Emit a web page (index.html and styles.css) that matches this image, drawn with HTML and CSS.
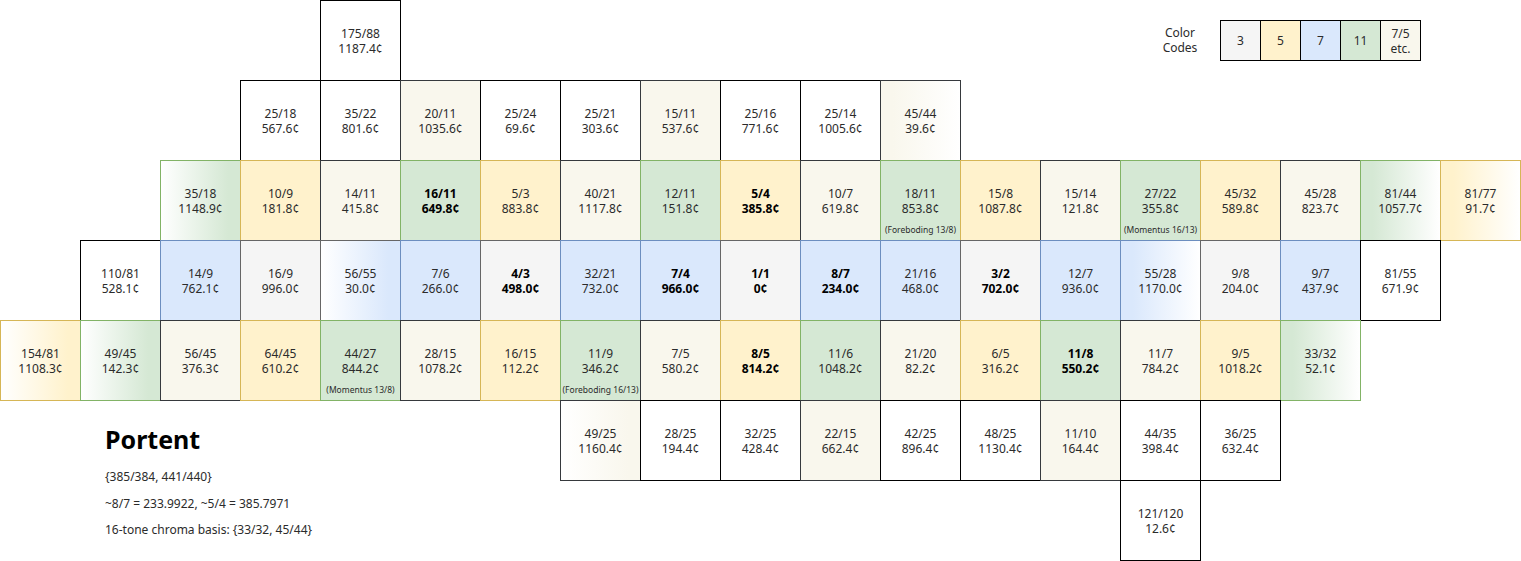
FILE: index.html
```html
<!DOCTYPE html>
<html lang="en">
<head>
<meta charset="utf-8">
<title>Portent</title>
<link rel="stylesheet" href="styles.css">
</head>
<body>
<div class="canvas">

  <div class="row r0">
    <div class="cell w"><div class="t">175/88<br>1187.4¢</div></div>
  </div>

  <div class="row r1">
    <div class="cell w"><div class="t">25/18<br>567.6¢</div></div>
    <div class="cell w"><div class="t">35/22<br>801.6¢</div></div>
    <div class="cell c"><div class="t">20/11<br>1035.6¢</div></div>
    <div class="cell w"><div class="t">25/24<br>69.6¢</div></div>
    <div class="cell w"><div class="t">25/21<br>303.6¢</div></div>
    <div class="cell c"><div class="t">15/11<br>537.6¢</div></div>
    <div class="cell w"><div class="t">25/16<br>771.6¢</div></div>
    <div class="cell w"><div class="t">25/14<br>1005.6¢</div></div>
    <div class="cell c-w"><div class="t">45/44<br>39.6¢</div></div>
  </div>

  <div class="row r2">
    <div class="cell w-g"><div class="t">35/18<br>1148.9¢</div></div>
    <div class="cell y"><div class="t">10/9<br>181.8¢</div></div>
    <div class="cell c"><div class="t">14/11<br>415.8¢</div></div>
    <div class="cell g"><div class="t b">16/11<br>649.8¢</div></div>
    <div class="cell y"><div class="t">5/3<br>883.8¢</div></div>
    <div class="cell c"><div class="t">40/21<br>1117.8¢</div></div>
    <div class="cell g"><div class="t">12/11<br>151.8¢</div></div>
    <div class="cell y"><div class="t b">5/4<br>385.8¢</div></div>
    <div class="cell c"><div class="t">10/7<br>619.8¢</div></div>
    <div class="cell g"><div class="t">18/11<br>853.8¢</div><div class="note">(Foreboding 13/8)</div></div>
    <div class="cell y"><div class="t">15/8<br>1087.8¢</div></div>
    <div class="cell c"><div class="t">15/14<br>121.8¢</div></div>
    <div class="cell g"><div class="t">27/22<br>355.8¢</div><div class="note">(Momentus 16/13)</div></div>
    <div class="cell y"><div class="t">45/32<br>589.8¢</div></div>
    <div class="cell c"><div class="t">45/28<br>823.7¢</div></div>
    <div class="cell g-w"><div class="t">81/44<br>1057.7¢</div></div>
    <div class="cell y-w"><div class="t">81/77<br>91.7¢</div></div>
  </div>

  <div class="row r3">
    <div class="cell w"><div class="t">110/81<br>528.1¢</div></div>
    <div class="cell bl"><div class="t">14/9<br>762.1¢</div></div>
    <div class="cell gr"><div class="t">16/9<br>996.0¢</div></div>
    <div class="cell w-bl"><div class="t">56/55<br>30.0¢</div></div>
    <div class="cell bl"><div class="t">7/6<br>266.0¢</div></div>
    <div class="cell gr"><div class="t b">4/3<br>498.0¢</div></div>
    <div class="cell bl"><div class="t">32/21<br>732.0¢</div></div>
    <div class="cell bl"><div class="t b">7/4<br>966.0¢</div></div>
    <div class="cell gr"><div class="t b">1/1<br>0¢</div></div>
    <div class="cell bl"><div class="t b">8/7<br>234.0¢</div></div>
    <div class="cell bl"><div class="t">21/16<br>468.0¢</div></div>
    <div class="cell gr"><div class="t b">3/2<br>702.0¢</div></div>
    <div class="cell bl"><div class="t">12/7<br>936.0¢</div></div>
    <div class="cell bl-w"><div class="t">55/28<br>1170.0¢</div></div>
    <div class="cell gr"><div class="t">9/8<br>204.0¢</div></div>
    <div class="cell bl"><div class="t">9/7<br>437.9¢</div></div>
    <div class="cell w"><div class="t">81/55<br>671.9¢</div></div>
  </div>

  <div class="row r4">
    <div class="cell w-y"><div class="t">154/81<br>1108.3¢</div></div>
    <div class="cell w-g"><div class="t">49/45<br>142.3¢</div></div>
    <div class="cell c"><div class="t">56/45<br>376.3¢</div></div>
    <div class="cell y"><div class="t">64/45<br>610.2¢</div></div>
    <div class="cell g"><div class="t">44/27<br>844.2¢</div><div class="note">(Momentus 13/8)</div></div>
    <div class="cell c"><div class="t">28/15<br>1078.2¢</div></div>
    <div class="cell y"><div class="t">16/15<br>112.2¢</div></div>
    <div class="cell g"><div class="t">11/9<br>346.2¢</div><div class="note">(Foreboding 16/13)</div></div>
    <div class="cell c"><div class="t">7/5<br>580.2¢</div></div>
    <div class="cell y"><div class="t b">8/5<br>814.2¢</div></div>
    <div class="cell g"><div class="t">11/6<br>1048.2¢</div></div>
    <div class="cell c"><div class="t">21/20<br>82.2¢</div></div>
    <div class="cell y"><div class="t">6/5<br>316.2¢</div></div>
    <div class="cell g"><div class="t b">11/8<br>550.2¢</div></div>
    <div class="cell c"><div class="t">11/7<br>784.2¢</div></div>
    <div class="cell y"><div class="t">9/5<br>1018.2¢</div></div>
    <div class="cell g-w"><div class="t">33/32<br>52.1¢</div></div>
  </div>

  <div class="row r5">
    <div class="cell w-c"><div class="t">49/25<br>1160.4¢</div></div>
    <div class="cell w"><div class="t">28/25<br>194.4¢</div></div>
    <div class="cell w"><div class="t">32/25<br>428.4¢</div></div>
    <div class="cell c"><div class="t">22/15<br>662.4¢</div></div>
    <div class="cell w"><div class="t">42/25<br>896.4¢</div></div>
    <div class="cell w"><div class="t">48/25<br>1130.4¢</div></div>
    <div class="cell c"><div class="t">11/10<br>164.4¢</div></div>
    <div class="cell w"><div class="t">44/35<br>398.4¢</div></div>
    <div class="cell w"><div class="t">36/25<br>632.4¢</div></div>
  </div>

  <div class="row r6">
    <div class="cell w"><div class="t">121/120<br>12.6¢</div></div>
  </div>

  <div class="legend">
    <div class="legend-label">Color<br>Codes</div>
    <div class="key gr">3</div>
    <div class="key y">5</div>
    <div class="key bl">7</div>
    <div class="key g">11</div>
    <div class="key c">7/5<br>etc.</div>
  </div>

  <div class="info">
    <h1 class="title">Portent</h1>
    <p class="line">{385/384, 441/440}</p>
    <p class="line">~8/7 = 233.9922, ~5/4 = 385.7971</p>
    <p class="line">16-tone chroma basis: {33/32, 45/44}</p>
  </div>

</div>
</body>
</html>
```

FILE: styles.css
```css
html, body {
  margin: 0;
  padding: 0;
  background: #ffffff;
}

body {
  font-family: "Noto Sans", "Open Sans", sans-serif;
  color: #2b2b2b;
  width: 1521px;
  height: 561px;
  overflow: hidden;
}

.canvas {
  display: grid;
  grid-template-columns: repeat(19, 80px);
  grid-template-rows: repeat(7, 80px);
  width: 1521px;
  height: 561px;
}

.row {
  grid-column: 1 / -1;
  display: flex;
  height: 80px;
}

.r0 { grid-row: 1; padding-left: 320px; }
.r1 { grid-row: 2; padding-left: 240px; }
.r2 { grid-row: 3; padding-left: 160px; }
.r3 { grid-row: 4; padding-left: 80px; }
.r4 { grid-row: 5; padding-left: 0; }
.r5 { grid-row: 6; padding-left: 560px; }
.r6 { grid-row: 7; padding-left: 1120px; }

.cell {
  flex: none;
  box-sizing: border-box;
  width: 81px;
  height: 81px;
  margin-right: -1px;
  border: 1px solid #000;
  display: grid;
  grid-template-rows: 1fr auto 1fr;
  text-align: center;
}

.t {
  grid-row: 2;
  font-size: 12px;
  line-height: 15px;
  color: #2b2b2b;
}

.t.b {
  font-weight: 700;
  color: #000;
}

.note {
  grid-row: 3;
  align-self: end;
  font-size: 8.5px;
  line-height: 10px;
  padding-bottom: 5px;
  white-space: nowrap;
  color: #2b2b2b;
  margin: 0 -2px;
}

/* palette */
.w  { background: #ffffff; border-color: #000000; }
.gr { background: #f5f5f5; border-color: #666666; }
.y  { background: #fff2cc; border-color: #d6b656; }
.bl { background: #dae8fc; border-color: #6c8ebf; }
.g  { background: #d5e8d4; border-color: #82b366; }
.c  { background: #f9f7ed; border-color: #36393d; }

/* gradients */
.w-g  { background: linear-gradient(to right, #ffffff, #d5e8d4 85%); border-color: #82b366; }
.g-w  { background: linear-gradient(to right, #d5e8d4 15%, #ffffff); border-color: #82b366; }
.w-y  { background: linear-gradient(to right, #ffffff, #fff2cc 85%); border-color: #d6b656; }
.y-w  { background: linear-gradient(to right, #fff2cc 15%, #ffffff); border-color: #d6b656; }
.w-bl { background: linear-gradient(to right, #ffffff, #dae8fc 85%); border-color: #666666; }
.bl-w { background: linear-gradient(to right, #dae8fc 15%, #ffffff); border-color: #6c8ebf; }
.c-w  { background: linear-gradient(to right, #f9f7ed 15%, #ffffff); border-color: #36393d; }
.w-c  { background: linear-gradient(to right, #ffffff, #f9f7ed 85%); border-color: #36393d; }

/* legend */
.legend {
  grid-row: 1;
  grid-column: 15 / 20;
  display: flex;
  align-items: flex-start;
  padding-left: 20px;
  padding-top: 20px;
}

.legend-label {
  width: 80px;
  text-align: center;
  font-size: 12px;
  line-height: 15px;
  padding-top: 5px;
  color: #2b2b2b;
}

.key {
  box-sizing: border-box;
  width: 41px;
  height: 41px;
  margin-right: -1px;
  border: 1px solid #000;
  display: flex;
  align-items: center;
  justify-content: center;
  text-align: center;
  font-size: 12px;
  line-height: 15px;
  color: #2b2b2b;
}

/* info block */
.info {
  grid-row: 6 / 8;
  grid-column: 1 / 8;
  padding-left: 105px;
  padding-top: 25px;
}

.title {
  margin: 0 0 11px 0;
  font-size: 25px;
  line-height: 28px;
  font-weight: 700;
  color: #000;
}

.line {
  margin: 0;
  font-size: 12px;
  line-height: 26.5px;
  color: #2b2b2b;
}
```
